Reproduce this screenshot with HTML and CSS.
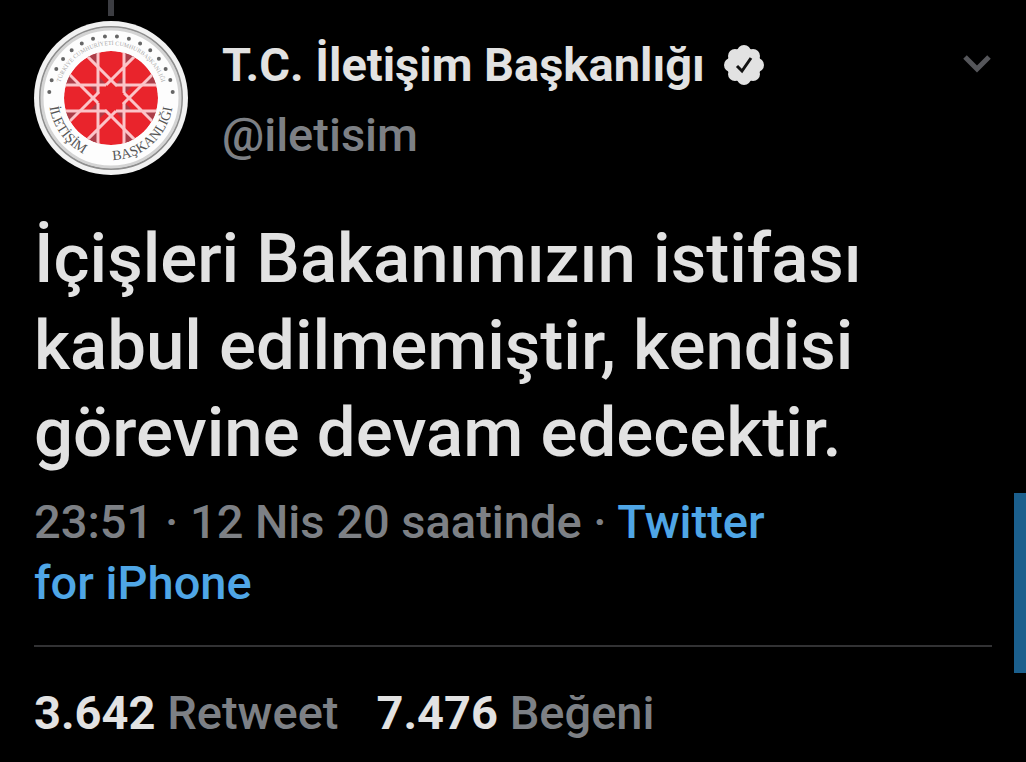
FILE: index.html
```html
<!DOCTYPE html>
<html lang="tr">
<head>
    <meta charset="UTF-8">
    <meta name="viewport" content="width=device-width, initial-scale=1.0">
    <title>T.C. İletişim Başkanlığı</title>
    <link rel="stylesheet" href="styles.css">
</head>
<body>
    <article class="tweet">
        <header class="tweet-header">
            <div class="avatar-column">
                <span class="thread-line"></span>
                <svg class="avatar" viewBox="-77 -77 154 154" role="img" aria-label="İletişim Başkanlığı">
                    <defs>
                        <clipPath id="disc"><circle r="47"/></clipPath>
                        <path id="ringBottom" d="M-62 0a62 62 0 0 0 124 0"/>
                        <path id="ringTop" d="M-53 0a53 53 0 0 1 106 0"/>
                        <!-- quarter of the star pattern: dark wedges, then the two bands -->
                        <path id="shade" d="M-13-31L-30-48H-13zM13-31L30-48H13zM-13-13V-22L-4-13zM13-13V-22L4-13z"/>
                        <path id="band" d="M-60-13H-5M5-13H60M-51-33L-13 5M-6 12L33 51"/>
                    </defs>
                    <circle r="77" fill="#f2f2f2"/>
                    <circle r="71" fill="#fdfdfd" stroke="#8e8e8e" stroke-width="2"/>
                    <circle r="69" fill="none" stroke="#d4d4d4" stroke-width="3"/>
                    <path class="stars" d="M-61.700-5.900A62 62 0 0 1 61.700-5.900" pathLength="150.100"/>
                    <text class="seal-small"><textPath href="#ringTop" startOffset="50%">TÜRKİYE CUMHURİYETİ CUMHURBAŞKANLIĞI</textPath></text>
                    <text class="seal-text"><textPath href="#ringBottom" startOffset="20%">İLETİŞİM</textPath></text>
                    <text class="seal-text"><textPath href="#ringBottom" startOffset="73%">BAŞKANLIĞI</textPath></text>
                    <g clip-path="url(#disc)">
                        <circle r="47" fill="#e9242c"/>
                        <g class="shade">
                            <use href="#shade"/>
                            <use href="#shade" transform="rotate(90)"/>
                            <use href="#shade" transform="rotate(180)"/>
                            <use href="#shade" transform="rotate(270)"/>
                        </g>
                        <g class="lattice">
                            <use href="#band"/>
                            <use href="#band" transform="rotate(90)"/>
                            <use href="#band" transform="rotate(180)"/>
                            <use href="#band" transform="rotate(270)"/>
                        </g>
                    </g>
                </svg>
            </div>
            <div class="author">
                <div class="author-name">
                    <span>T.C. İletişim Başkanlığı</span>
                    <svg class="verified" viewBox="0 0 42 42" role="img" aria-label="Onaylanmış hesap">
                        <g fill="#e2e2e2">
                            <circle cx="21" cy="21" r="17"/>
                            <circle cx="21" cy="8" r="7"/><circle cx="30" cy="12" r="7"/>
                            <circle cx="34" cy="21" r="7"/><circle cx="30" cy="30" r="7"/>
                            <circle cx="21" cy="34" r="7"/><circle cx="12" cy="30" r="7"/>
                            <circle cx="8" cy="21" r="7"/><circle cx="12" cy="12" r="7"/>
                        </g>
                        <path d="M14 22l5 5 9-13" fill="none" stroke="#111" stroke-width="3"/>
                    </svg>
                </div>
                <div class="author-handle">@iletisim</div>
            </div>
            <button class="more" type="button" aria-label="Diğer">
                <svg viewBox="0 0 30 20"><path d="M3 3l12 12L27 3"/></svg>
            </button>
        </header>

        <p class="tweet-text">İçişleri Bakanımızın istifası kabul edilmemiştir, kendisi görevine devam edecektir.</p>

        <p class="tweet-meta">23:51 · 12 Nis 20 saatinde · <a href="#">Twitter for iPhone</a></p>

        <footer class="tweet-stats">
            <span><strong>3.642</strong> Retweet</span>
            <span><strong>7.476</strong> Beğeni</span>
        </footer>
    </article>
    <div class="scroll-marker"></div>
</body>
</html>
```
FILE: styles.css
```css
* {
    box-sizing: border-box;
}
body {
    margin: 0;
    background: #000;
    color: #e2e2e2;
    font-family: Roboto, "Liberation Sans", sans-serif;
    font-size: 47px;
    font-weight: 500;
}
.tweet {
    padding: 0 34px;
}
.tweet-header {
    display: flex;
}
.avatar-column {
    display: flex;
    flex-direction: column;
    align-items: center;
    gap: 5px;
    margin-right: 34px;
}
.thread-line {
    width: 6px;
    height: 16px;
    background: #3c3d42;
}
.avatar {
    display: block;
    width: 154px;
    height: 154px;
}
.stars {
    fill: none;
    stroke: #666;
    stroke-width: 4;
    stroke-linecap: round;
    stroke-dasharray: 0 10;
}
.seal-text,
.seal-small {
    font-family: "Liberation Serif", serif;
    font-weight: 400;
    text-anchor: middle;
}
.seal-text {
    font-size: 14px;
    fill: #555;
}
.seal-small {
    font-size: 6px;
    fill: #aaa;
}
.lattice {
    fill: none;
    stroke: #fbc4c8;
    stroke-width: 3;
}
.shade {
    fill: #ac3d48;
}
.author {
    flex: 1;
    padding-top: 30px;
}
.author-name,
.author-handle {
    line-height: 70px;
}
.author-name {
    display: flex;
    align-items: center;
    gap: 18px;
    font-weight: 700;
}
.verified {
    width: 42px;
    height: 42px;
}
.author-handle {
    color: #7d8085;
}
.more {
    align-self: flex-start;
    margin-top: 54px;
    padding: 0;
    border: 0;
    background: none;
    cursor: pointer;
}
.more svg {
    display: block;
    width: 30px;
    height: 20px;
    fill: none;
    stroke: #55565a;
    stroke-width: 5;
}
.tweet-text {
    max-width: 860px;
    margin: 40px 0 0;
    font-size: 69px;
    line-height: 87px;
}
.tweet-meta {
    max-width: 760px;
    margin: 15px 0 0;
    color: #7d8085;
    line-height: 61px;
}
.tweet-meta a {
    color: #4fa6e6;
    text-decoration: none;
}
.tweet-stats {
    display: flex;
    gap: 38px;
    margin-top: 32px;
    padding: 36px 0 20px;
    border-top: 2px solid #323234;
    color: #7d8085;
    line-height: 60px;
}
.tweet-stats strong {
    color: #e2e2e2;
    font-weight: 700;
}
/* strip of the scroll position on the right edge */
.scroll-marker {
    position: absolute;
    top: 493px;
    right: 0;
    width: 12px;
    height: 180px;
    background: #1b5f8d;
}
```
